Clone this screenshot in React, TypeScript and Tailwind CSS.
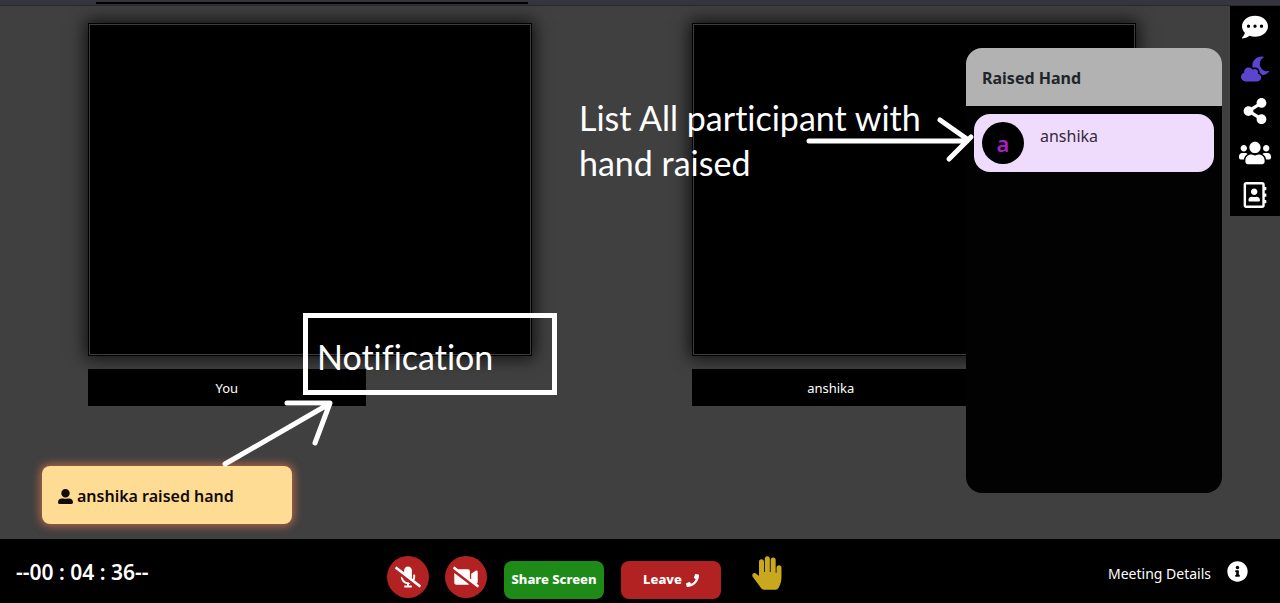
import {
  FaCloudMoon,
  FaCommentDots,
  FaInfoCircle,
  FaMicrophoneSlash,
  FaPhone,
  FaRegAddressBook,
  FaShareAlt,
  FaUserAlt,
  FaUsers,
  FaVideoSlash,
} from "react-icons/fa";

const tools = [
  { label: "Chat", icon: FaCommentDots, tone: "text-white", size: 26 },
  { label: "Theme", icon: FaCloudMoon, tone: "text-[#5b45cf]", size: 28 },
  { label: "Share", icon: FaShareAlt, tone: "text-white", size: 26 },
  { label: "Participants", icon: FaUsers, tone: "text-white", size: 32 },
  { label: "Contacts", icon: FaRegAddressBook, tone: "text-white", size: 26 },
];

function RaisedHandIcon() {
  return (
    <svg width="30" height="34" viewBox="0 0 90 102" fill="currentColor" aria-hidden="true">
      <path d="M21 60V17a7.500 7.500 0 0 1 15 0V48H38.500V8.500a7.500 7.500 0 0 1 15 0V48H56V12a7.500 7.500 0 0 1 15 0V50H73.500V35a7.500 7.500 0 0 1 15 0V62C88.500 74 86 84 80 95Q77 101 71 101H36Q30 101 27 96L2 62C-2 54 6 48 13 53Z" />
    </svg>
  );
}

function VideoTile({ name }: { name: string }) {
  return (
    <figure>
      <div className="aspect-[4/3] border border-black bg-black shadow-[0_0_16px_2px_rgba(0,0,0,0.8)]">
        <div className="h-full border border-[#3c3c3c]" />
      </div>
      <figcaption className="mt-[13px] w-5/8 bg-black pt-[9px] pb-2 text-center text-[13px] leading-5 text-white">
        {name}
      </figcaption>
    </figure>
  );
}

function RaisedHands({ names }: { names: string[] }) {
  return (
    <aside className="absolute top-[42px] right-[58px] bottom-[46px] w-64 overflow-hidden rounded-2xl bg-[#020202]">
      <h2 className="bg-[#b2b2b2] px-4 pt-[18px] pb-4 text-[16px] leading-6 font-bold text-[#212529]">
        Raised Hand
      </h2>
      <ul className="p-2">
        {names.map((name) => (
          <li key={name} className="flex items-start rounded-2xl bg-[#efdcfc] py-2 pl-2 text-[#33293b]">
            <span className="flex size-[42px] items-center justify-center rounded-full bg-black text-[22px] leading-6 font-semibold text-[#a81fc4]">
              {name[0]}
            </span>
            <span className="ml-4 text-[16px] leading-7">{name}</span>
          </li>
        ))}
      </ul>
    </aside>
  );
}

function Annotations() {
  return (
    <div className="pointer-events-none absolute inset-0 font-['Lato',sans-serif] text-[34px] text-white [font-variant-ligatures:none]">
      <p className="absolute top-[89px] left-[579px] leading-[45px] whitespace-nowrap">
        List All participant with
        <br />
        hand raised
      </p>
      <p className="absolute top-[307px] left-[303px] w-[254px] border-[5px] border-white px-[9px] pt-[17px] pb-[11px] leading-[44px]">
        Notification
      </p>
      <svg
        className="absolute top-0 left-0"
        width="1000"
        height="500"
        viewBox="0 6 1000 500"
        fill="none"
        stroke="currentColor"
        strokeWidth="5"
        strokeLinecap="round"
        strokeLinejoin="round"
        aria-hidden="true"
      >
        <path d="M809 141H967M940 120L967 139M949 159L971 137" />
        <path d="M225 464L329 404M287 403H330L315 443" />
      </svg>
    </div>
  );
}

export default function App() {
  return (
    <div className="flex min-h-screen flex-col overflow-hidden bg-[#404040] font-['Noto_Sans',sans-serif]">
      <header className="h-[6px] border-b border-[#292929] bg-[#34353d] pt-[2px] pl-24">
        <div className="h-[2px] w-[432px] bg-black" />
      </header>

      <main className="relative flex-1">
        <section className="grid grid-cols-2 gap-40 pt-[17px] pr-36 pb-[131px] pl-[88px]">
          <VideoTile name="You" />
          <VideoTile name="anshika" />
        </section>

        <RaisedHands names={["anshika"]} />

        <nav className="absolute top-0 right-0 flex w-[50px] flex-col bg-black">
          {tools.map(({ label, icon: Icon, tone, size }) => (
            <button
              key={label}
              type="button"
              aria-label={label}
              className={`flex h-[42px] items-center justify-center ${tone}`}
            >
              <Icon size={size} />
            </button>
          ))}
        </nav>

        <div
          role="status"
          className="absolute bottom-[15px] left-[42px] flex w-[250px] items-center gap-1 rounded-lg bg-[#ffdc93] px-4 pt-[18px] pb-4 text-[16px] leading-6 font-semibold text-[#120a04] shadow-[0_0_8px_2px_rgba(255,127,80,0.6)]"
        >
          <FaUserAlt size={15} />
          anshika raised hand
        </div>

        <Annotations />
      </main>

      <footer className="relative flex h-16 items-center justify-between bg-black pr-8 pl-4 text-white">
        <time className="pt-[2px] text-[21px] leading-8 font-semibold">--00 : 04 : 36--</time>
        <div className="absolute left-[387px] flex items-center pt-3">
          <button
            type="button"
            aria-label="Unmute"
            className="flex size-[42px] items-center justify-center rounded-full bg-[#b22222]"
          >
            <FaMicrophoneSlash size={26} />
          </button>
          <button
            type="button"
            aria-label="Start video"
            className="ml-4 flex size-[42px] items-center justify-center rounded-full bg-[#b22222]"
          >
            <FaVideoSlash size={26} />
          </button>
          <button
            type="button"
            className="mt-[6px] ml-[17px] h-[38px] w-[100px] rounded-lg bg-[#1e8a17] text-[13px] font-extrabold"
          >
            Share Screen
          </button>
          <button
            type="button"
            className="mt-[6px] ml-[17px] flex h-[38px] w-[100px] items-center justify-center gap-1 rounded-lg bg-[#b22222] text-[13px] font-extrabold"
          >
            Leave <FaPhone size={13} />
          </button>
          <button type="button" aria-label="Raise hand" className="mb-2 ml-[31px] text-[#c9a820]">
            <RaisedHandIcon />
          </button>
        </div>
        <button type="button" className="flex items-center gap-4 text-[14px] leading-6">
          <span className="pt-[6px]">Meeting Details</span>
          <FaInfoCircle size={21} />
        </button>
      </footer>
    </div>
  );
}
